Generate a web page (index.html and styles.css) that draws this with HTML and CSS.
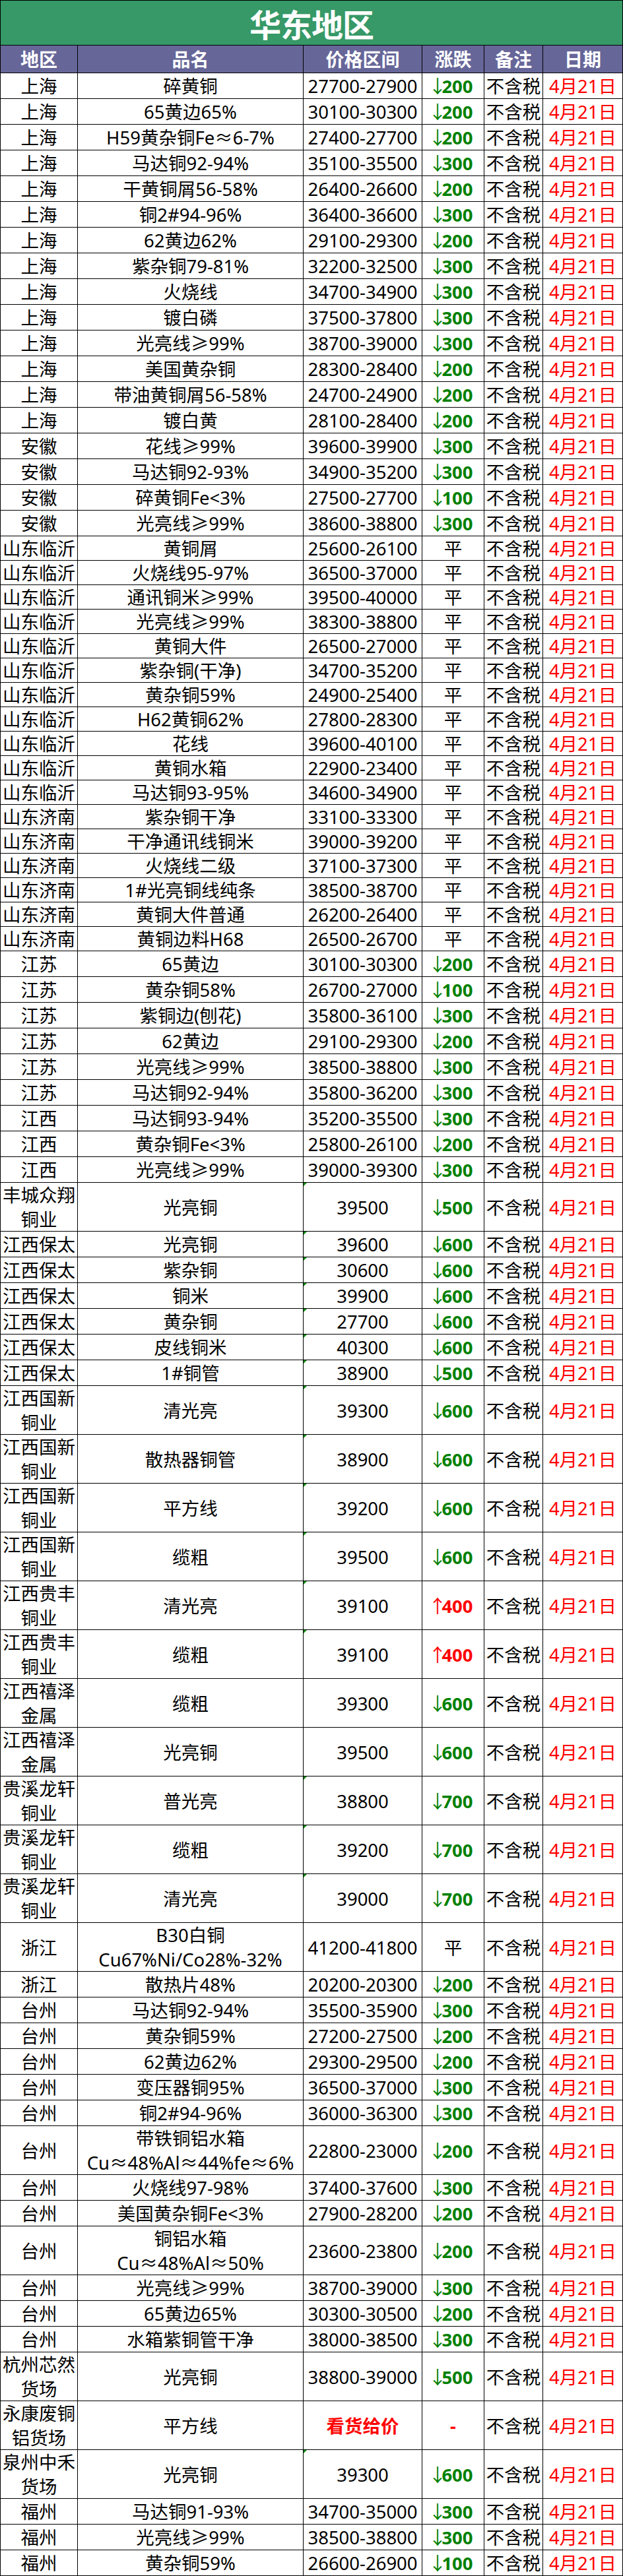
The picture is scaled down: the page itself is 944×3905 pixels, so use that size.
FILE: index.html
```html
<!DOCTYPE html>
<html lang="zh-CN">
<head>
<meta charset="utf-8">
<title>华东地区</title>
<link rel="stylesheet" href="styles.css">
</head>
<body>
<div class="sheet">
  <div class="title">华东地区</div>
  <div class="row hd">
    <div class="c">地区</div><div class="c">品名</div><div class="c">价格区间</div><div class="c">涨跌</div><div class="c">备注</div><div class="c">日期</div>
  </div>

  <div class="row"><div class="c">上海</div><div class="c">碎黄铜</div><div class="c">27700-27900</div><div class="c"><span class="dn"><i class="arw">↓</i>200</span></div><div class="c">不含税</div><div class="c date">4月21日</div></div>
  <div class="row"><div class="c">上海</div><div class="c">65黄边65%</div><div class="c">30100-30300</div><div class="c"><span class="dn"><i class="arw">↓</i>200</span></div><div class="c">不含税</div><div class="c date">4月21日</div></div>
  <div class="row"><div class="c">上海</div><div class="c">H59黄杂铜Fe≈6-7%</div><div class="c">27400-27700</div><div class="c"><span class="dn"><i class="arw">↓</i>200</span></div><div class="c">不含税</div><div class="c date">4月21日</div></div>
  <div class="row"><div class="c">上海</div><div class="c">马达铜92-94%</div><div class="c">35100-35500</div><div class="c"><span class="dn"><i class="arw">↓</i>300</span></div><div class="c">不含税</div><div class="c date">4月21日</div></div>
  <div class="row"><div class="c">上海</div><div class="c">干黄铜屑56-58%</div><div class="c">26400-26600</div><div class="c"><span class="dn"><i class="arw">↓</i>200</span></div><div class="c">不含税</div><div class="c date">4月21日</div></div>
  <div class="row"><div class="c">上海</div><div class="c">铜2#94-96%</div><div class="c">36400-36600</div><div class="c"><span class="dn"><i class="arw">↓</i>300</span></div><div class="c">不含税</div><div class="c date">4月21日</div></div>
  <div class="row"><div class="c">上海</div><div class="c">62黄边62%</div><div class="c">29100-29300</div><div class="c"><span class="dn"><i class="arw">↓</i>200</span></div><div class="c">不含税</div><div class="c date">4月21日</div></div>
  <div class="row"><div class="c">上海</div><div class="c">紫杂铜79-81%</div><div class="c">32200-32500</div><div class="c"><span class="dn"><i class="arw">↓</i>300</span></div><div class="c">不含税</div><div class="c date">4月21日</div></div>
  <div class="row"><div class="c">上海</div><div class="c">火烧线</div><div class="c">34700-34900</div><div class="c"><span class="dn"><i class="arw">↓</i>300</span></div><div class="c">不含税</div><div class="c date">4月21日</div></div>
  <div class="row"><div class="c">上海</div><div class="c">镀白磷</div><div class="c">37500-37800</div><div class="c"><span class="dn"><i class="arw">↓</i>300</span></div><div class="c">不含税</div><div class="c date">4月21日</div></div>
  <div class="row"><div class="c">上海</div><div class="c">光亮线≥99%</div><div class="c">38700-39000</div><div class="c"><span class="dn"><i class="arw">↓</i>300</span></div><div class="c">不含税</div><div class="c date">4月21日</div></div>
  <div class="row"><div class="c">上海</div><div class="c">美国黄杂铜</div><div class="c">28300-28400</div><div class="c"><span class="dn"><i class="arw">↓</i>200</span></div><div class="c">不含税</div><div class="c date">4月21日</div></div>
  <div class="row"><div class="c">上海</div><div class="c">带油黄铜屑56-58%</div><div class="c">24700-24900</div><div class="c"><span class="dn"><i class="arw">↓</i>200</span></div><div class="c">不含税</div><div class="c date">4月21日</div></div>
  <div class="row"><div class="c">上海</div><div class="c">镀白黄</div><div class="c">28100-28400</div><div class="c"><span class="dn"><i class="arw">↓</i>200</span></div><div class="c">不含税</div><div class="c date">4月21日</div></div>
  <div class="row"><div class="c">安徽</div><div class="c">花线≥99%</div><div class="c">39600-39900</div><div class="c"><span class="dn"><i class="arw">↓</i>300</span></div><div class="c">不含税</div><div class="c date">4月21日</div></div>
  <div class="row"><div class="c">安徽</div><div class="c">马达铜92-93%</div><div class="c">34900-35200</div><div class="c"><span class="dn"><i class="arw">↓</i>300</span></div><div class="c">不含税</div><div class="c date">4月21日</div></div>
  <div class="row"><div class="c">安徽</div><div class="c">碎黄铜Fe&lt;3%</div><div class="c">27500-27700</div><div class="c"><span class="dn"><i class="arw">↓</i>100</span></div><div class="c">不含税</div><div class="c date">4月21日</div></div>
  <div class="row"><div class="c">安徽</div><div class="c">光亮线≥99%</div><div class="c">38600-38800</div><div class="c"><span class="dn"><i class="arw">↓</i>300</span></div><div class="c">不含税</div><div class="c date">4月21日</div></div>

  <div class="row s"><div class="c">山东临沂</div><div class="c">黄铜屑</div><div class="c">25600-26100</div><div class="c">平</div><div class="c">不含税</div><div class="c date">4月21日</div></div>
  <div class="row s"><div class="c">山东临沂</div><div class="c">火烧线95-97%</div><div class="c">36500-37000</div><div class="c">平</div><div class="c">不含税</div><div class="c date">4月21日</div></div>
  <div class="row s"><div class="c">山东临沂</div><div class="c">通讯铜米≥99%</div><div class="c">39500-40000</div><div class="c">平</div><div class="c">不含税</div><div class="c date">4月21日</div></div>
  <div class="row s"><div class="c">山东临沂</div><div class="c">光亮线≥99%</div><div class="c">38300-38800</div><div class="c">平</div><div class="c">不含税</div><div class="c date">4月21日</div></div>
  <div class="row s"><div class="c">山东临沂</div><div class="c">黄铜大件</div><div class="c">26500-27000</div><div class="c">平</div><div class="c">不含税</div><div class="c date">4月21日</div></div>
  <div class="row s"><div class="c">山东临沂</div><div class="c">紫杂铜(干净)</div><div class="c">34700-35200</div><div class="c">平</div><div class="c">不含税</div><div class="c date">4月21日</div></div>
  <div class="row s"><div class="c">山东临沂</div><div class="c">黄杂铜59%</div><div class="c">24900-25400</div><div class="c">平</div><div class="c">不含税</div><div class="c date">4月21日</div></div>
  <div class="row s"><div class="c">山东临沂</div><div class="c">H62黄铜62%</div><div class="c">27800-28300</div><div class="c">平</div><div class="c">不含税</div><div class="c date">4月21日</div></div>
  <div class="row s"><div class="c">山东临沂</div><div class="c">花线</div><div class="c">39600-40100</div><div class="c">平</div><div class="c">不含税</div><div class="c date">4月21日</div></div>
  <div class="row s"><div class="c">山东临沂</div><div class="c">黄铜水箱</div><div class="c">22900-23400</div><div class="c">平</div><div class="c">不含税</div><div class="c date">4月21日</div></div>
  <div class="row s"><div class="c">山东临沂</div><div class="c">马达铜93-95%</div><div class="c">34600-34900</div><div class="c">平</div><div class="c">不含税</div><div class="c date">4月21日</div></div>
  <div class="row s"><div class="c">山东济南</div><div class="c">紫杂铜干净</div><div class="c">33100-33300</div><div class="c">平</div><div class="c">不含税</div><div class="c date">4月21日</div></div>
  <div class="row s"><div class="c">山东济南</div><div class="c">干净通讯线铜米</div><div class="c">39000-39200</div><div class="c">平</div><div class="c">不含税</div><div class="c date">4月21日</div></div>
  <div class="row s"><div class="c">山东济南</div><div class="c">火烧线二级</div><div class="c">37100-37300</div><div class="c">平</div><div class="c">不含税</div><div class="c date">4月21日</div></div>
  <div class="row s"><div class="c">山东济南</div><div class="c">1#光亮铜线纯条</div><div class="c">38500-38700</div><div class="c">平</div><div class="c">不含税</div><div class="c date">4月21日</div></div>
  <div class="row s"><div class="c">山东济南</div><div class="c">黄铜大件普通</div><div class="c">26200-26400</div><div class="c">平</div><div class="c">不含税</div><div class="c date">4月21日</div></div>
  <div class="row s"><div class="c">山东济南</div><div class="c">黄铜边料H68</div><div class="c">26500-26700</div><div class="c">平</div><div class="c">不含税</div><div class="c date">4月21日</div></div>

  <div class="row"><div class="c">江苏</div><div class="c">65黄边</div><div class="c">30100-30300</div><div class="c"><span class="dn"><i class="arw">↓</i>200</span></div><div class="c">不含税</div><div class="c date">4月21日</div></div>
  <div class="row"><div class="c">江苏</div><div class="c">黄杂铜58%</div><div class="c">26700-27000</div><div class="c"><span class="dn"><i class="arw">↓</i>100</span></div><div class="c">不含税</div><div class="c date">4月21日</div></div>
  <div class="row"><div class="c">江苏</div><div class="c">紫铜边(刨花)</div><div class="c">35800-36100</div><div class="c"><span class="dn"><i class="arw">↓</i>300</span></div><div class="c">不含税</div><div class="c date">4月21日</div></div>
  <div class="row"><div class="c">江苏</div><div class="c">62黄边</div><div class="c">29100-29300</div><div class="c"><span class="dn"><i class="arw">↓</i>200</span></div><div class="c">不含税</div><div class="c date">4月21日</div></div>
  <div class="row"><div class="c">江苏</div><div class="c">光亮线≥99%</div><div class="c">38500-38800</div><div class="c"><span class="dn"><i class="arw">↓</i>300</span></div><div class="c">不含税</div><div class="c date">4月21日</div></div>
  <div class="row"><div class="c">江苏</div><div class="c">马达铜92-94%</div><div class="c">35800-36200</div><div class="c"><span class="dn"><i class="arw">↓</i>300</span></div><div class="c">不含税</div><div class="c date">4月21日</div></div>
  <div class="row"><div class="c">江西</div><div class="c">马达铜93-94%</div><div class="c">35200-35500</div><div class="c"><span class="dn"><i class="arw">↓</i>300</span></div><div class="c">不含税</div><div class="c date">4月21日</div></div>
  <div class="row"><div class="c">江西</div><div class="c">黄杂铜Fe&lt;3%</div><div class="c">25800-26100</div><div class="c"><span class="dn"><i class="arw">↓</i>200</span></div><div class="c">不含税</div><div class="c date">4月21日</div></div>
  <div class="row"><div class="c">江西</div><div class="c">光亮线≥99%</div><div class="c">39000-39300</div><div class="c"><span class="dn"><i class="arw">↓</i>300</span></div><div class="c">不含税</div><div class="c date">4月21日</div></div>

  <div class="row d"><div class="c">丰城众翔铜业</div><div class="c">光亮铜</div><div class="c tri">39500</div><div class="c"><span class="dn"><i class="arw">↓</i>500</span></div><div class="c">不含税</div><div class="c date">4月21日</div></div>
  <div class="row"><div class="c">江西保太</div><div class="c">光亮铜</div><div class="c tri">39600</div><div class="c"><span class="dn"><i class="arw">↓</i>600</span></div><div class="c">不含税</div><div class="c date">4月21日</div></div>
  <div class="row"><div class="c">江西保太</div><div class="c">紫杂铜</div><div class="c tri">30600</div><div class="c"><span class="dn"><i class="arw">↓</i>600</span></div><div class="c">不含税</div><div class="c date">4月21日</div></div>
  <div class="row"><div class="c">江西保太</div><div class="c">铜米</div><div class="c tri">39900</div><div class="c"><span class="dn"><i class="arw">↓</i>600</span></div><div class="c">不含税</div><div class="c date">4月21日</div></div>
  <div class="row"><div class="c">江西保太</div><div class="c">黄杂铜</div><div class="c tri">27700</div><div class="c"><span class="dn"><i class="arw">↓</i>600</span></div><div class="c">不含税</div><div class="c date">4月21日</div></div>
  <div class="row"><div class="c">江西保太</div><div class="c">皮线铜米</div><div class="c tri">40300</div><div class="c"><span class="dn"><i class="arw">↓</i>600</span></div><div class="c">不含税</div><div class="c date">4月21日</div></div>
  <div class="row"><div class="c">江西保太</div><div class="c">1#铜管</div><div class="c tri">38900</div><div class="c"><span class="dn"><i class="arw">↓</i>500</span></div><div class="c">不含税</div><div class="c date">4月21日</div></div>
  <div class="row d"><div class="c">江西国新铜业</div><div class="c">清光亮</div><div class="c tri">39300</div><div class="c"><span class="dn"><i class="arw">↓</i>600</span></div><div class="c">不含税</div><div class="c date">4月21日</div></div>
  <div class="row d"><div class="c">江西国新铜业</div><div class="c">散热器铜管</div><div class="c tri">38900</div><div class="c"><span class="dn"><i class="arw">↓</i>600</span></div><div class="c">不含税</div><div class="c date">4月21日</div></div>
  <div class="row d"><div class="c">江西国新铜业</div><div class="c">平方线</div><div class="c tri">39200</div><div class="c"><span class="dn"><i class="arw">↓</i>600</span></div><div class="c">不含税</div><div class="c date">4月21日</div></div>
  <div class="row d"><div class="c">江西国新铜业</div><div class="c">缆粗</div><div class="c tri">39500</div><div class="c"><span class="dn"><i class="arw">↓</i>600</span></div><div class="c">不含税</div><div class="c date">4月21日</div></div>
  <div class="row d"><div class="c">江西贵丰铜业</div><div class="c">清光亮</div><div class="c tri">39100</div><div class="c"><span class="up"><i class="arw">↑</i>400</span></div><div class="c">不含税</div><div class="c date">4月21日</div></div>
  <div class="row d"><div class="c">江西贵丰铜业</div><div class="c">缆粗</div><div class="c tri">39100</div><div class="c"><span class="up"><i class="arw">↑</i>400</span></div><div class="c">不含税</div><div class="c date">4月21日</div></div>
  <div class="row d"><div class="c">江西禧泽金属</div><div class="c">缆粗</div><div class="c">39300</div><div class="c"><span class="dn"><i class="arw">↓</i>600</span></div><div class="c">不含税</div><div class="c date">4月21日</div></div>
  <div class="row d"><div class="c">江西禧泽金属</div><div class="c">光亮铜</div><div class="c">39500</div><div class="c"><span class="dn"><i class="arw">↓</i>600</span></div><div class="c">不含税</div><div class="c date">4月21日</div></div>
  <div class="row d"><div class="c">贵溪龙轩铜业</div><div class="c">普光亮</div><div class="c tri">38800</div><div class="c"><span class="dn"><i class="arw">↓</i>700</span></div><div class="c">不含税</div><div class="c date">4月21日</div></div>
  <div class="row d"><div class="c">贵溪龙轩铜业</div><div class="c">缆粗</div><div class="c tri">39200</div><div class="c"><span class="dn"><i class="arw">↓</i>700</span></div><div class="c">不含税</div><div class="c date">4月21日</div></div>
  <div class="row d"><div class="c">贵溪龙轩铜业</div><div class="c">清光亮</div><div class="c tri">39000</div><div class="c"><span class="dn"><i class="arw">↓</i>700</span></div><div class="c">不含税</div><div class="c date">4月21日</div></div>

  <div class="row d"><div class="c">浙江</div><div class="c"><span>B30白铜<br>Cu67%Ni/Co28%-32%</span></div><div class="c">41200-41800</div><div class="c">平</div><div class="c">不含税</div><div class="c date">4月21日</div></div>
  <div class="row"><div class="c">浙江</div><div class="c">散热片48%</div><div class="c">20200-20300</div><div class="c"><span class="dn"><i class="arw">↓</i>200</span></div><div class="c">不含税</div><div class="c date">4月21日</div></div>
  <div class="row"><div class="c">台州</div><div class="c">马达铜92-94%</div><div class="c">35500-35900</div><div class="c"><span class="dn"><i class="arw">↓</i>300</span></div><div class="c">不含税</div><div class="c date">4月21日</div></div>
  <div class="row"><div class="c">台州</div><div class="c">黄杂铜59%</div><div class="c">27200-27500</div><div class="c"><span class="dn"><i class="arw">↓</i>200</span></div><div class="c">不含税</div><div class="c date">4月21日</div></div>
  <div class="row"><div class="c">台州</div><div class="c">62黄边62%</div><div class="c">29300-29500</div><div class="c"><span class="dn"><i class="arw">↓</i>200</span></div><div class="c">不含税</div><div class="c date">4月21日</div></div>
  <div class="row"><div class="c">台州</div><div class="c">变压器铜95%</div><div class="c">36500-37000</div><div class="c"><span class="dn"><i class="arw">↓</i>300</span></div><div class="c">不含税</div><div class="c date">4月21日</div></div>
  <div class="row"><div class="c">台州</div><div class="c">铜2#94-96%</div><div class="c">36000-36300</div><div class="c"><span class="dn"><i class="arw">↓</i>300</span></div><div class="c">不含税</div><div class="c date">4月21日</div></div>
  <div class="row d"><div class="c">台州</div><div class="c"><span>带铁铜铝水箱<br>Cu≈48%Al≈44%fe≈6%</span></div><div class="c">22800-23000</div><div class="c"><span class="dn"><i class="arw">↓</i>200</span></div><div class="c">不含税</div><div class="c date">4月21日</div></div>
  <div class="row"><div class="c">台州</div><div class="c">火烧线97-98%</div><div class="c">37400-37600</div><div class="c"><span class="dn"><i class="arw">↓</i>300</span></div><div class="c">不含税</div><div class="c date">4月21日</div></div>
  <div class="row"><div class="c">台州</div><div class="c">美国黄杂铜Fe&lt;3%</div><div class="c">27900-28200</div><div class="c"><span class="dn"><i class="arw">↓</i>200</span></div><div class="c">不含税</div><div class="c date">4月21日</div></div>
  <div class="row d"><div class="c">台州</div><div class="c"><span>铜铝水箱<br>Cu≈48%Al≈50%</span></div><div class="c">23600-23800</div><div class="c"><span class="dn"><i class="arw">↓</i>200</span></div><div class="c">不含税</div><div class="c date">4月21日</div></div>
  <div class="row"><div class="c">台州</div><div class="c">光亮线≥99%</div><div class="c">38700-39000</div><div class="c"><span class="dn"><i class="arw">↓</i>300</span></div><div class="c">不含税</div><div class="c date">4月21日</div></div>
  <div class="row"><div class="c">台州</div><div class="c">65黄边65%</div><div class="c">30300-30500</div><div class="c"><span class="dn"><i class="arw">↓</i>200</span></div><div class="c">不含税</div><div class="c date">4月21日</div></div>
  <div class="row"><div class="c">台州</div><div class="c">水箱紫铜管干净</div><div class="c">38000-38500</div><div class="c"><span class="dn"><i class="arw">↓</i>300</span></div><div class="c">不含税</div><div class="c date">4月21日</div></div>
  <div class="row d"><div class="c">杭州芯然货场</div><div class="c">光亮铜</div><div class="c">38800-39000</div><div class="c"><span class="dn"><i class="arw">↓</i>500</span></div><div class="c">不含税</div><div class="c date">4月21日</div></div>
  <div class="row d"><div class="c">永康废铜铝货场</div><div class="c">平方线</div><div class="c"><b class="red">看货给价</b></div><div class="c"><b class="red">-</b></div><div class="c">不含税</div><div class="c date">4月21日</div></div>
  <div class="row d"><div class="c">泉州中禾货场</div><div class="c">光亮铜</div><div class="c tri">39300</div><div class="c"><span class="dn"><i class="arw">↓</i>600</span></div><div class="c">不含税</div><div class="c date">4月21日</div></div>
  <div class="row"><div class="c">福州</div><div class="c">马达铜91-93%</div><div class="c">34700-35000</div><div class="c"><span class="dn"><i class="arw">↓</i>300</span></div><div class="c">不含税</div><div class="c date">4月21日</div></div>
  <div class="row"><div class="c">福州</div><div class="c">光亮线≥99%</div><div class="c">38500-38800</div><div class="c"><span class="dn"><i class="arw">↓</i>300</span></div><div class="c">不含税</div><div class="c date">4月21日</div></div>
  <div class="row"><div class="c">福州</div><div class="c">黄杂铜59%</div><div class="c">26600-26900</div><div class="c"><span class="dn"><i class="arw">↓</i>100</span></div><div class="c">不含税</div><div class="c date">4月21日</div></div>
</div>
</body>
</html>
```

FILE: styles.css
```css
* { box-sizing: border-box; }

html, body {
  margin: 0;
  padding: 0;
  background: #ffffff;
}

body {
  font-family: "Noto Sans", "Noto Sans CJK SC", sans-serif;
  color: #000000;
}

.sheet {
  width: 944px;
}

.title {
  height: 69px;
  border: 1px solid #000000;
  background: #369967;
  color: #ffffff;
  font-family: "Noto Sans CJK SC", sans-serif;
  font-weight: 700;
  font-size: 48px;
  display: flex;
  align-items: center;
  justify-content: center;
  letter-spacing: -1px;
}

.row {
  display: grid;
  grid-template-columns: 118px 342px 180px 94px 89px 121px;
  height: 39px;
  border-bottom: 1px solid #000000;
}

.row.s { height: 37px; }
.row.d { height: 74px; }

.row.hd {
  height: 42px;
  background: #666699;
}

.row.hd .c {
  color: #ffffff;
  font-weight: 700;
  font-size: 28px;
  font-family: "Noto Sans CJK SC", sans-serif;
}

.c {
  display: flex;
  align-items: center;
  justify-content: center;
  text-align: center;
  border-right: 1px solid #000000;
  font-size: 27.5px;
  line-height: 37px;
  padding: 0 2px;
  white-space: normal;
  overflow: visible;
}

.c:first-child {
  border-left: 1px solid #000000;
}

.date { color: #ff0000; }

.dn {
  color: #008000;
  font-weight: 700;
  white-space: nowrap;
}

.up {
  color: #ff0000;
  font-weight: 700;
  white-space: nowrap;
}

.arw {
  display: inline-flex;
  justify-content: center;
  width: 13px;
  font-style: normal;
  font-weight: 400;
  font-family: "Noto Sans CJK SC", sans-serif;
}

.red {
  color: #ff0000;
  font-weight: 700;
}

.tri { position: relative; }

.tri::before {
  content: "";
  position: absolute;
  left: 0;
  top: 0;
  border-style: solid;
  border-width: 5px 5px 0 0;
  border-color: #0a8a0a transparent transparent transparent;
}
```
